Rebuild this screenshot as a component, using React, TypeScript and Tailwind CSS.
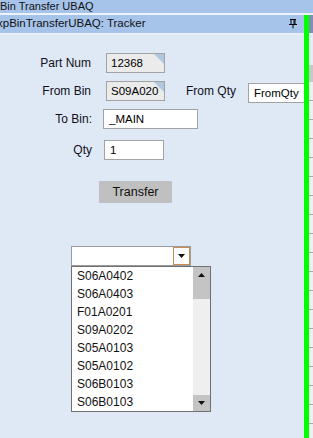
import React from "react";

const BINS = ["S06A0402", "S06A0403", "F01A0201", "S09A0202", "S05A0103", "S05A0102", "S06B0103", "S06B0103"];

const font = "font-['Liberation_Sans',Arial,sans-serif]";

// Read-only box with the little blue corner fold.
function ReadOnlyBox({ value }: { value: string }) {
  return (
    <div className="relative h-[20px] w-[59px] shrink-0 border border-[#a3a3a3] bg-[#ebebeb] pl-[4px] text-[11.5px] leading-[18px] text-black">
      {value}
      <svg className="absolute right-0 top-0" width="10" height="10" viewBox="0 0 10 10">
        <polygon points="0,0 10,0 10,10" fill="#b3c6e0" />
      </svg>
    </div>
  );
}

function Input({ value, width }: { value: string; width: string }) {
  return (
    <div className={`h-[20px] ${width} shrink-0 border border-[#a3a3a3] bg-white pl-[5px] text-[11.5px] leading-[18px] text-black`}>
      {value}
    </div>
  );
}

function Caret({ up }: { up?: boolean }) {
  return (
    <svg width="7" height="4" viewBox="0 0 7 4">
      <polygon points={up ? "3.5,0 7,4 0,4" : "0,0 7,0 3.5,4"} fill="#111" />
    </svg>
  );
}

export default function App() {
  return (
    <div className={`flex h-[438px] w-[313px] flex-col overflow-hidden bg-[#dfe8f5] ${font}`}>
      {/* window title */}
      <div className="h-[13px] shrink-0 whitespace-nowrap bg-[#a6c3ea] text-[11px] leading-[13px] text-[#111]">Bin Transfer UBAQ</div>
      <div className="h-[2px] shrink-0 bg-[#eef3fa]" />

      <div className="flex min-h-0 flex-1">
        <div className="flex min-w-0 flex-1 flex-col overflow-hidden">
          {/* tab header */}
          <div className="flex h-[18px] shrink-0 items-center justify-between bg-[#a6c3ea] pr-[7px]">
            <span className="-ml-[3px] whitespace-nowrap text-[11.5px] text-[#111]">xpBinTransferUBAQ: Tracker</span>
            <svg width="8" height="10" viewBox="0 0 8 10">
              <path d="M1 0.5h6M2 0.5v5M6 0.5v5M0 5.5h8M4 5.5v4" stroke="#000" strokeWidth="1" fill="none" />
              <rect x="4.5" y="1" width="1" height="4.5" fill="#000" />
            </svg>
          </div>
          <div className="h-[2px] shrink-0 bg-[#e9eef6]" />

          {/* form */}
          <div className="flex flex-col text-[12px] text-[#101020]">
            <div className="mt-[18px] flex items-center">
              <span className="w-[91px] shrink-0 text-right">Part Num</span>
              <div className="ml-[15px] shrink-0"><ReadOnlyBox value="12368" /></div>
            </div>

            <div className="mt-[8px] flex items-center">
              <span className="w-[91px] shrink-0 text-right">From Bin</span>
              <div className="ml-[15px] shrink-0"><ReadOnlyBox value="S09A020" /></div>
              <span className="ml-[21px] w-[62px] shrink-0">From Qty</span>
              <div className="-mb-[2px] mt-[2px] shrink-0"><Input value="FromQty" width="w-[64px]" /></div>
            </div>

            <div className="mt-[8px] flex items-center">
              <span className="w-[92px] shrink-0 text-right">To Bin:</span>
              <div className="ml-[11px] shrink-0"><Input value="_MAIN" width="w-[95px]" /></div>
            </div>

            <div className="mt-[11px] flex items-center">
              <span className="w-[92px] shrink-0 text-right">Qty</span>
              <div className="ml-[12px] shrink-0"><Input value="1" width="w-[60px]" /></div>
            </div>

            <div className="ml-[99px] mt-[21px] flex h-[22px] w-[73px] items-center justify-center bg-[#c0c0c0] text-[12.5px] text-[#111]">
              Transfer
            </div>

            {/* combo + open list */}
            <div className="ml-[71px] mt-[43px] flex h-[20px] w-[120px] items-stretch border border-[#9c9c9c] bg-white">
              <div className="flex-1" />
              <div className="flex w-[17px] items-center justify-center border border-[#c88c54] bg-white">
                <Caret />
              </div>
            </div>
            <div className="ml-[71px] flex h-[146px] w-[140px] border border-[#707070] bg-white">
              <div className="flex-1">
                {BINS.map((b, i) => (
                  <div key={i} className="h-[18px] pl-[5px] text-[12px] leading-[18px] text-[#111]">{b}</div>
                ))}
              </div>
              <div className="flex w-[17px] flex-col bg-[#efefef]">
                <div className="flex h-[32px] justify-center bg-[#c4c4c4] pt-[6px]">
                  <Caret up />
                </div>
                <div className="flex-1" />
                <div className="flex h-[16px] items-center justify-center bg-[#c4c4c4]">
                  <Caret />
                </div>
              </div>
            </div>
          </div>
        </div>

        {/* green splitter */}
        <div className="w-[5px] shrink-0 bg-[#00ff00]" />
        {/* neighbouring grid edge */}
        <div className="flex w-[4px] shrink-0 flex-col bg-[#efefef]">
          <div className="h-[18px] shrink-0 bg-[#7f8fb8]" />
          <div className="h-[32px] shrink-0 bg-[#e6ecf4]" />
          <div className="h-[17px] shrink-0 bg-[#c8c8c8]" />
          {Array.from({ length: 19 }).map((_, i) => (
            <div key={i} className="h-[19px] shrink-0 border-b border-[#a8a8a8]" />
          ))}
        </div>
      </div>
    </div>
  );
}
